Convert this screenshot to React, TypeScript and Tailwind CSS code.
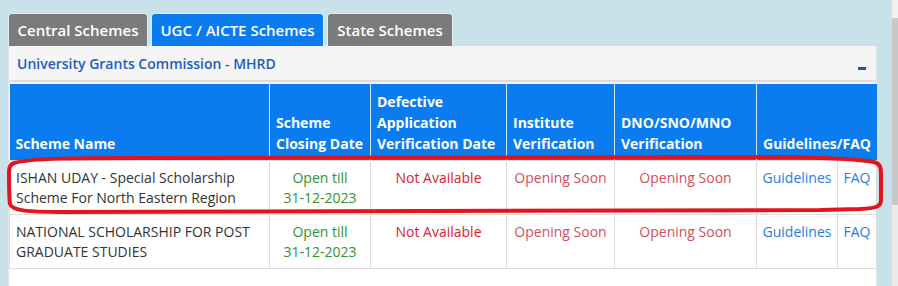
import React from "react"

const tabs = [
  { label: "Central Schemes", width: "w-[140px]", active: false },
  { label: "UGC / AICTE Schemes", width: "w-[173px]", active: true },
  { label: "State Schemes", width: "w-[126px]", active: false },
]

const rows = [
  {
    name: ["ISHAN UDAY - Special Scholarship", "Scheme For North Eastern Region"],
    closing: "31-12-2023",
  },
  {
    name: ["NATIONAL SCHOLARSHIP FOR POST", "GRADUATE STUDIES"],
    closing: "31-12-2023",
  },
]

export default function App() {
  return (
    <div className="relative flex h-[286px] w-full overflow-hidden bg-[#c9e2e9] font-['Open_Sans','Liberation_Sans',sans-serif]">
      <div className="flex-1 pl-[8px] pt-[13px] pr-[15px]">
        {/* Tabs */}
        <div className="flex gap-[3px]">
          {tabs.map((tab) => (
            <div
              key={tab.label}
              className={`${tab.width} h-[33px] flex items-center justify-center rounded-t-[4px] border border-b-0 border-[#e8eef0] text-[15px] font-semibold text-white ${
                tab.active ? "bg-[#0b7cf0]" : "bg-[#7b7b7b]"
              }`}
            >
              {tab.label}
            </div>
          ))}
        </div>

        {/* Panel */}
        <div className="w-[869px] bg-white border-x border-[#e6e6e6]">
          <div className="flex h-[36px] items-center justify-between bg-[#f5f5f5] border-b-2 border-[#dcdcdc] pl-[8px] pr-[10px]">
            <span className="text-[14px] font-semibold text-[#1d5cc0]">University Grants Commission - MHRD</span>
            <span className="mt-[10px] h-[3px] w-[8px] bg-[#1f55a8]" />
          </div>
          <div className="bg-[#f5f5f5] h-[2px]" />

          <table className="w-[867px] table-fixed border-collapse text-[14px] leading-[21px]">
            <colgroup>
              <col className="w-[260px]" />
              <col className="w-[101px]" />
              <col className="w-[136px]" />
              <col className="w-[108px]" />
              <col className="w-[142px]" />
              <col className="w-[81px]" />
              <col className="w-[39px]" />
            </colgroup>
            <thead>
              <tr className="bg-[#0b7cf0] text-white font-bold text-left align-bottom">
                <th className="h-[76px] px-[6px] pb-[6px] border-r border-white/80">Scheme Name</th>
                <th className="px-[6px] pb-[6px] border-r border-white/80 whitespace-nowrap">
                  Scheme
                  <br />
                  Closing Date
                </th>
                <th className="px-[6px] pb-[6px] border-r border-white/80 whitespace-nowrap">
                  Defective
                  <br />
                  Application
                  <br />
                  Verification Date
                </th>
                <th className="px-[6px] pb-[6px] border-r border-white/80 whitespace-nowrap">
                  Institute
                  <br />
                  Verification
                </th>
                <th className="px-[6px] pb-[6px] border-r border-white/80 whitespace-nowrap">
                  DNO/SNO/MNO
                  <br />
                  Verification
                </th>
                <th colSpan={2} className="px-[6px] pb-[6px] whitespace-nowrap">
                  Guidelines/FAQ
                </th>
              </tr>
            </thead>
            <tbody>
              {rows.map((row, i) => (
                <tr key={i} className="align-top text-center leading-[20px]">
                  <td className="h-[54px] border border-[#dddddd] px-[6px] pt-[7px] text-left text-[#333333] whitespace-nowrap">
                    {row.name[0]}
                    <br />
                    {row.name[1]}
                  </td>
                  <td className="border border-[#dddddd] px-[4px] pt-[7px] text-[#2f9236]">
                    Open till
                    <br />
                    {row.closing}
                  </td>
                  <td className="border border-[#dddddd] px-[4px] pt-[7px] text-[#e0222b]">Not Available</td>
                  <td className="border border-[#dddddd] px-[4px] pt-[7px] text-[#d44f5b] whitespace-nowrap">Opening Soon</td>
                  <td className="border border-[#dddddd] px-[4px] pt-[7px] text-[#d44f5b] whitespace-nowrap">Opening Soon</td>
                  <td className="border border-[#dddddd] px-[2px] pt-[7px] text-[#2a7be0]">Guidelines</td>
                  <td className="border border-[#dddddd] px-[2px] pt-[7px] text-[#2a7be0]">FAQ</td>
                </tr>
              ))}
            </tbody>
          </table>
          <div className="h-[40px]" />
        </div>
      </div>

      {/* Page scrollbar */}
      <div className="flex w-[6px] flex-col bg-[#ebebeb]">
        <div className="h-[18px] bg-[#f1f1f1]" />
        <div className="h-[187px] bg-[#c8c8c8]" />
      </div>

      {/* Red hand-drawn highlight annotation */}
      <svg className="pointer-events-none absolute inset-0" width="898" height="286" viewBox="0 0 898 286">
        <path
          d="M 14 163 C 30 158, 80 158, 140 158 L 790 157 C 830 158, 860 159, 874 162 C 881 164, 881 168, 881 176 L 881 200 C 881 207, 876 208, 860 209 L 820 210 L 60 212 C 30 212, 12 211, 10 204 C 9 196, 9 180, 9 172 C 9 166, 11 164, 14 163 Z"
          fill="none"
          stroke="#e3141d"
          strokeWidth="4"
          strokeLinejoin="round"
        />
      </svg>
    </div>
  )
}
